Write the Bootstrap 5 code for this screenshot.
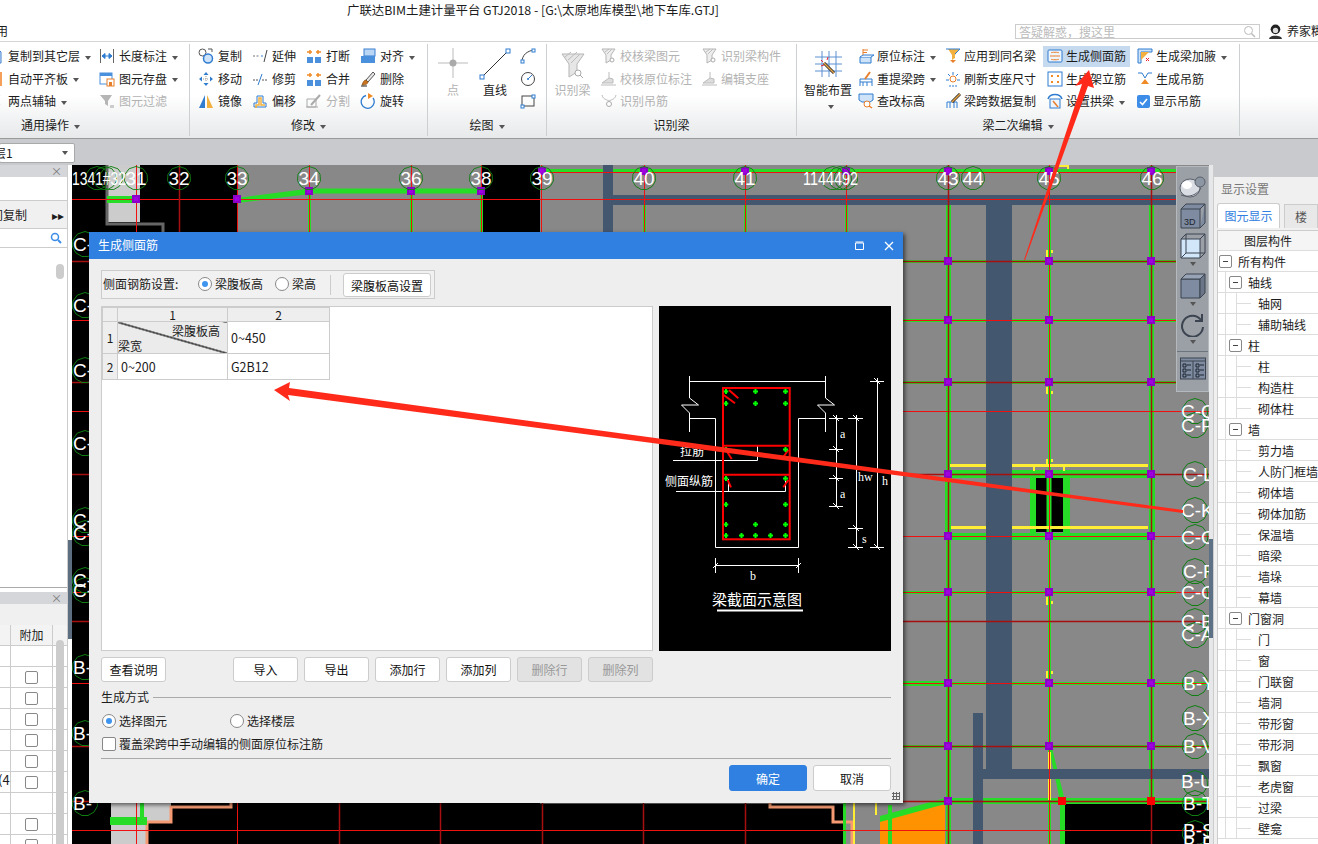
<!DOCTYPE html>
<html lang="zh">
<head>
<meta charset="utf-8">
<title>广联达BIM土建计量平台</title>
<link href="https://cdn.jsdelivr.net/npm/bootstrap@5.3.0/dist/css/bootstrap.min.css" rel="stylesheet">
<style>
html,body{margin:0;height:844px;width:1318px;overflow:hidden}
body{position:relative;font:12px/1.2 "Noto Sans CJK SC","Noto Sans",sans-serif;color:#1c1c1c;background:#fff}
.ic{width:16px;height:16px;flex:none}
.fn{flex:none}
.hdr1{height:21px;padding-left:347px;line-height:21px;white-space:nowrap;font-size:12.4px}
.hdr2{height:20px;overflow:hidden}
.hdr2 .mn{margin-left:-4px}
.srch{width:245px;height:15px;border:1px solid #ccc;color:#bbb;padding:0 3px;line-height:13px}
.usr{width:58px;padding-left:8px;white-space:nowrap;overflow:hidden;flex:none}
.ribbon{height:98px;border-top:1px solid #d5d5d5;border-bottom:1px solid #9a9a9a;background:linear-gradient(#fff 55%,#e7e9ea);display:flex}
.rg{display:flex;flex-direction:column;border-right:1px solid #ccd0d2;margin:2px 0 2px;flex:none}
.rb{display:grid;grid-template-rows:repeat(3,22.5px);grid-auto-flow:column;height:72px;margin-top:1px}
.rf{height:22px;line-height:22px;text-align:center;margin-top:0}
.it{display:flex;align-items:center;gap:3px;white-space:nowrap;height:22.5px}
.g1 .it,.g2 .it{gap:4px}
.dis{color:#b3b3b3}
.tri{display:inline-block;width:0;height:0;border:3px solid transparent;border-top:4px solid #555;border-bottom:0;margin-left:5px;vertical-align:middle}
.tbtri{margin:3px 0}
.bigit{grid-row:1/span 3;display:flex;flex-direction:column;align-items:center;white-space:nowrap}
.g1{width:190px}.g1 .rb{grid-template-columns:111px 80px;margin-left:-12px}.g1 .rf{padding-right:88px}
.g2{width:238px}.g2 .rb{grid-template-columns:54px 54px 54px 60px;padding-left:8px}
.g3{width:119px}.g3 .rb{grid-template-columns:42px 40px 20px;padding-left:10px}.g3 .bigit{width:30px}.g3 .bigit svg{margin-top:3px}.g3 .bigit span{margin-top:3px}
.g4{width:250px}.g4 .rb{grid-template-columns:47px 101px 90px;padding-left:7px}.g4 .bigit{width:37px}
.g5{width:443px}.g5 .rb{grid-template-columns:55px 87px 102px 90px 90px;padding-left:6px}.g5 .bigit{width:50px}
.hlt{background:#c5d9ef;margin:1px 0 1px -4px;padding-left:4px;width:87px;height:20.5px}
.chk-on{width:13px;height:13px;background:#3d8de8;border-radius:2px;color:#fff;flex:none;display:flex}
.bar2{height:26px;background:#c8cacd;padding-top:4px}
.sel{width:76px;height:20px;margin-left:-1px;background:#fff;border:1px solid #a9a9a9;border-radius:2px;display:flex;align-items:center;justify-content:space-between;padding:0 6px 0 0;overflow:hidden}
.sel span:first-child{margin-left:-6px}
.mainrow{height:679px;display:flex;overflow:hidden}
.lp{width:68px;border-right:1px solid #ccc;flex:none;display:flex;flex-direction:column;background:#fff;overflow:hidden;white-space:nowrap}
.lbar{height:12px;background:#d4d6da;text-align:right;padding-right:5px;line-height:12px;font-size:11px;color:#777;flex:none}
.lblank{height:23px;flex:none}
.lgray{background:#f0f0f0;border-top:1px solid #ccc;border-bottom:1px solid #ccc;height:29px;line-height:27px;display:flex;justify-content:space-between;padding-right:3px;flex:none}
.lsearch{height:19px;border-bottom:1px solid #ccc;display:flex;justify-content:flex-end;padding-right:5px;align-items:center;flex:none}
.lscroll{height:340px;position:relative;border-bottom:1px solid #aaa;flex:none}
.thumb{position:absolute;left:56px;width:8px;background:#ccc;border-radius:4px}
.lp2{position:relative;flex:1;margin-top:4px}
.lsub{background:#f0f0f0;height:21px}
.lr{height:21px;display:flex;border-bottom:1px solid #ccc;flex:none}
.lr .a{width:11px;border-right:1px solid #ccc;flex:none;overflow:hidden;text-indent:-2px;font-size:13px}
.lr .b{width:42px;border-right:1px solid #ccc;display:flex;align-items:center;justify-content:center;flex:none}
.lhead{background:#f3f3f3}
.cbx{width:13px;height:13px;border:1px solid #888;border-radius:2px;background:#fff;flex:none;display:inline-block}
.sbar{width:4px;flex:none;background:#fff;position:relative}
.sbar i{position:absolute;left:0;width:4px;background:#5d6e80}
.cv{width:1137px;flex:none;position:relative;overflow:hidden;background:#000}
.cv>svg{display:block}
.ftb{position:absolute;left:1104px;top:1px;width:33px;height:226px;background:#9b9fa6;border:1px solid #b5b8bc;display:flex;flex-direction:column;align-items:center}
.sb2{width:4px;flex:none;position:relative;background:#e6e7e8}
.rp{flex:1;background:#f0f0f0;border-left:1px solid #ccc;overflow:hidden;white-space:nowrap}
.rp-top{height:12px;background:#c8cacd}
.rp-h{height:23px;line-height:23px;padding-left:7px;color:#777}
.tabs{display:flex;padding-left:3px;gap:4px;height:25px;margin-top:3px}
.tb1{width:75px;background:#fff;border:1px solid #ccc;border-bottom:0;border-radius:3px 3px 0 0;text-align:center;line-height:24px;color:#2f80e0}
.tb2{width:40px;background:#e8e8e8;border:1px solid #ccc;border-bottom:0;text-align:center;line-height:24px;color:#555;margin-top:1px}
.tree{margin:2px 0 0 3px;border-left:1px solid #ccc;background:#fff;height:620px}
.thd{height:21px;line-height:19px;text-align:center;background:#f5f5f5;border-bottom:1px solid #ddd;border-top:1px solid #ccc}
.tr0{height:21px;border-bottom:1px solid #ddd;display:flex;align-items:center;background-repeat:no-repeat;padding-top:2px}
.exp{width:13px;height:13px;border:1px solid #888;border-radius:2px;background:#fff;display:inline-block;position:relative;flex:none;margin-right:6px;margin-top:-2px}
.exp::after{content:"";position:absolute;left:3px;right:3px;top:5px;height:1px;background:#444}
.l0{padding-left:1px}
.l1{padding-left:11px;background-image:linear-gradient(#ddd,#ddd);background-size:1px 100%;background-position:7px 0}
.l2{padding-left:40px;background-image:linear-gradient(#ddd,#ddd),linear-gradient(#ddd,#ddd),linear-gradient(#ddd,#ddd);background-size:1px 100%,1px 100%,15px 1px;background-position:7px 0,18px 0,18px 10px}
.dlg{position:absolute;left:89px;top:232px;width:814px;height:571px;background:#eee;box-shadow:2px 2px 4px rgba(0,0,0,.55);display:flex;flex-direction:column}
.dt{height:27px;background:#2f80e0;color:#fff;display:flex;align-items:center;justify-content:space-between;padding:0 9px 0 9px;flex:none}
.dt b{font-weight:400;letter-spacing:0}
.db{flex:1;padding:11px 12px 0 12px;position:relative}
.r1{height:29px;width:334px;border:1px solid #ccc;background:#f1f1f1;display:flex;align-items:center;padding-left:1px}
.rd{width:14px;height:14px;border:1px solid #888;border-radius:50%;background:#fff;display:inline-block;flex:none;position:relative}
.rd.on::after{content:"";position:absolute;left:3px;top:3px;width:6px;height:6px;border-radius:50%;background:#3f94ee}
.btn.bd{height:25px;width:65px;padding:0;font-size:12px;line-height:23px;border:1px solid #ccc;border-radius:3px;background:#fff;color:#111;flex:none}
.btn.bd:disabled{background:#e2e2e2;color:#999;opacity:1;border-color:#ccc}
.btn.bp{background:#2f80e0;border-color:#2f80e0;color:#fff;width:78px;height:26px}
.btn.bw{width:78px;height:26px}
.tbox{width:552px;height:345px;background:#fff;border:1px solid #ccc;flex:none}
.gt{border-collapse:collapse;table-layout:fixed;width:227px}
.gt td,.gt th{border:1px solid #ccc;padding:0 3px;font-weight:400;font-size:12.5px}
.gt .hh{background:#eee;text-align:center;height:14px;line-height:12px;font-size:12px;padding:0}
.gt .diag{height:32px;padding:0;font-size:12px;background:linear-gradient(to top right,transparent calc(50% - .9px),#111 calc(50% - .4px),#111 calc(50% + .4px),transparent calc(50% + .9px)),#ebebeb}
.diag div{display:flex;flex-direction:column;height:100%;justify-content:space-between;line-height:14px;padding:2px 7px 0 0}
.diag span:first-child{text-align:right}
.fl{display:flex;align-items:center;gap:3px;white-space:nowrap}
.hrln{flex:1;height:0;border-top:1px solid #aaa}
.grip{position:absolute;right:3px;bottom:3px;width:8px;height:8px;background:radial-gradient(circle,#666 1px,transparent 1.2px) 0 0/3px 3px}
.ovl{position:absolute;left:0;top:0;pointer-events:none}
</style>
</head>
<body>
<svg width="0" height="0" style="position:absolute">
<defs>
<symbol id="c" viewBox="0 0 26 26"><path d="M13 .5 20.5 3 25 9 25.5 16 22 22 16 25.5H10L4 22 .5 16 1 9 5.5 3Z" fill="none" stroke="#0f7f12"/></symbol>
<symbol id="p" viewBox="0 0 8 8"><rect width="8" height="8" fill="#8a00c8"/><rect x="2" y="2" width="4" height="4" fill="#a000e0"/></symbol>
<symbol id="g" viewBox="0 0 5 5"><path d="M1.500 0h2v1.500H5v2H3.500V5h-2V3.500H0v-2h1.500z" fill="#0f0"/></symbol>
<symbol id="i-doc" viewBox="0 0 16 16"><path d="M3 1h7l3 3v11H3z" fill="#dce9f7" stroke="#3b7fd0"/></symbol>
<symbol id="i-dim" viewBox="0 0 16 16"><path d="M1.5 1v14M14.5 1v14" stroke="#666"/><path d="M3 8h10M3 8l3-2.5v5zM13 8l-3-2.5v5z" stroke="#2f7cd0" fill="#2f7cd0"/></symbol>
<symbol id="i-win" viewBox="0 0 16 16"><rect x="1" y="2" width="12" height="11" fill="#fff" stroke="#4a90dc"/><path d="M1 2h12v3H1z" fill="#4a90dc"/><rect x="8" y="8" width="7" height="7" fill="#fff" stroke="#e87f2b"/><rect x="10" y="11" width="3" height="4" fill="#e87f2b"/></symbol>
<symbol id="i-fun" viewBox="0 0 16 16"><path d="M1 2h12L9 8v5L6 11V8z" fill="#b5b5b5"/><path d="M11 12h4v3h-4z" fill="#ccc"/></symbol>
<symbol id="i-cp" viewBox="0 0 16 16"><circle cx="4.5" cy="4.5" r="3.5" fill="#fff" stroke="#555"/><circle cx="10" cy="10.5" r="4.5" fill="#cfe3f8" stroke="#2f7cd0" stroke-width="1.5"/><path d="M10 1h4v3" fill="none" stroke="#555"/></symbol>
<symbol id="i-ext" viewBox="0 0 16 16"><path d="M1 8h7" stroke="#777" stroke-dasharray="2 1.5"/><path d="M9 8h3" stroke="#2f7cd0" stroke-dasharray="2 1"/><path d="M15 2 12 14" stroke="#444"/></symbol>
<symbol id="i-brk" viewBox="0 0 16 16"><rect x="1" y="9" width="6" height="6" fill="#4a90dc"/><rect x="9" y="9" width="6" height="6" fill="#4a90dc"/><path d="M1 4h5M4 2v4M10 4h5M12 2v4" stroke="#f08a24" stroke-width="1.5"/></symbol>
<symbol id="i-aln" viewBox="0 0 16 16"><rect x="4" y="1" width="11" height="7" fill="#b9d6f5" stroke="#3b7fd0"/><rect x="1" y="8" width="14" height="7" fill="#4a90dc"/></symbol>
<symbol id="i-mov" viewBox="0 0 16 16"><path d="M8 1 5.500 4h5zM8 15l-2.500-3h5zM1 8l3-2.500v5zM15 8l-3-2.500v5z" fill="#2f7cd0"/><path d="M8 5v6M5 8h6" stroke="#999" stroke-dasharray="1 1"/></symbol>
<symbol id="i-trm" viewBox="0 0 16 16"><path d="M1 9h5M10 9h5" stroke="#555" stroke-dasharray="2 1"/><path d="M6 14 10 3" stroke="#2f7cd0"/></symbol>
<symbol id="i-del" viewBox="0 0 16 16"><path d="M13 1 6 9l2 2 7-8z" fill="#e6e6e6" stroke="#555"/><path d="M6 9c-2 0-3 2-4 5 3 0 6-1 6-3z" fill="#c8741f" stroke="#8a4a10" stroke-width=".7"/><path d="M1 15h6" stroke="#222"/></symbol>
<symbol id="i-mir" viewBox="0 0 16 16"><path d="M7 2v13H1z" fill="#2f7cd0"/><path d="M9 2v13h6z" fill="#f2b13e"/></symbol>
<symbol id="i-off" viewBox="0 0 16 16"><path d="M2 14v-4h3V3h6v7h3v4z" fill="none" stroke="#2f7cd0"/><path d="M4 15v-3h3V5h2v7h4" fill="none" stroke="#f2b13e" stroke-width="1.500"/></symbol>
<symbol id="i-spl" viewBox="0 0 16 16"><path d="M1 6h9v8H1z" fill="none" stroke="#aaa"/><path d="M5 12 14 2" stroke="#aaa" stroke-width="2"/><path d="M0 14h12" stroke="#aaa"/></symbol>
<symbol id="i-rot" viewBox="0 0 16 16"><path d="M6 2.500A6.500 6.500 0 1 0 13 5" fill="none" stroke="#2f7cd0" stroke-width="1.300"/><path d="M8 0l5 3-5 3z" fill="#f08a24"/></symbol>
<symbol id="i-chk1" viewBox="0 0 28 30"><path d="M3 5h22l-7 10v8l-8 5V15z" fill="#e6e6e6" stroke="#b5b5b5"/><path d="M6 8 12 3M9 11l9-8M12 14l9-9" stroke="#bbb"/><circle cx="19" cy="24" r="3" fill="#fff" stroke="#aaa"/><path d="M21 26l3 3" stroke="#aaa"/></symbol>
<symbol id="i-chk2" viewBox="0 0 16 16"><path d="M1 1h13l-4 6v5l-5 3V7z" fill="#eee" stroke="#b5b5b5"/><path d="M4 4l4-3M6 6l5-5" stroke="#bbb"/><circle cx="11" cy="12" r="2" fill="#fff" stroke="#aaa"/></symbol>
<symbol id="i-chk3" viewBox="0 0 16 16"><path d="M8 1v6" stroke="#bbb"/><path d="M1 12l7-5 4 1v4z" fill="#ddd" stroke="#bbb"/><path d="M0 14h15" stroke="#bbb"/></symbol>
<symbol id="i-hng" viewBox="0 0 16 16"><path d="M1 2c1 4 3 4 7 6 4-2 6-2 7-6" fill="none" stroke="#bbb"/><circle cx="8" cy="11" r="2.500" fill="#fff" stroke="#aaa"/></symbol>
<symbol id="i-smt" viewBox="0 0 30 34"><path d="M9 2v26M16 2v26M23 2v26M2 8h27M2 15h27M2 22h27" stroke="#5a90d0"/><path d="M11 14l10 10" stroke="#222" stroke-width="3"/><path d="M11 14l10 10" stroke="#e7a54a" stroke-width="1.500"/><path d="M8 11l2 2M15 8l-1 3M8 17l3-1" stroke="#e23"/></symbol>
<symbol id="i-yw" viewBox="0 0 16 16"><path d="M2 9h11v6H2z" fill="#cfe3f8" stroke="#2f7cd0"/><path d="M2 9l3-2h11l-3 2" fill="#e8f1fb" stroke="#2f7cd0"/><path d="M5 1v6M5 2h5M5 4.500h4" stroke="#e87f2b"/></symbol>
<symbol id="i-ct" viewBox="0 0 16 16"><path d="M3 1h11l-4 6v3l-3 2V7z" fill="#f2b13e"/><path d="M1 1h14l-5 5" fill="none" stroke="#2f7cd0"/><path d="M5 12l3 3 3-3z" fill="#e87f2b"/></symbol>
<symbol id="i-cm" viewBox="0 0 16 16"><rect x="1" y="2" width="14" height="12" rx="1" fill="#eef5fc" stroke="#2f7cd0"/><path d="M4 5c0-1 8-1 8 0M4 11c0 1 8 1 8 0" fill="none" stroke="#e87f2b"/><path d="M3 8h10" stroke="#e87f2b"/></symbol>
<symbol id="i-jl" viewBox="0 0 16 16"><rect x="1" y="1" width="14" height="14" fill="#fff" stroke="#2f7cd0"/><rect x="4" y="4" width="2" height="2" fill="#f08a24"/><rect x="10" y="4" width="2" height="2" fill="#f08a24"/><rect x="4" y="10" width="2" height="2" fill="#f08a24"/><rect x="10" y="10" width="2" height="2" fill="#f08a24"/></symbol>
<symbol id="i-ty" viewBox="0 0 16 16"><path d="M2 15V8h12v7M2 11h12M5 11v4M9 11v4" fill="none" stroke="#2f7cd0"/><path d="M12 1 7 8" stroke="#e87f2b" stroke-width="2"/></symbol>
<symbol id="i-cg" viewBox="0 0 16 16"><path d="M1 1h14v6l-3 2H4L1 7z" fill="#cfe3f8" stroke="#2f7cd0"/><circle cx="9" cy="11" r="3" fill="#fff" stroke="#e87f2b"/><path d="M11 13l3 2" stroke="#e87f2b" stroke-width="1.500"/></symbol>
<symbol id="i-sx" viewBox="0 0 16 16"><circle cx="8" cy="8" r="3" fill="none" stroke="#e87f2b"/><path d="M8 1v3M3 3l2 2M13 3l-2 2M1 9h3M12 9h3" stroke="#2f7cd0"/><path d="M4 15h8" stroke="#2f7cd0" stroke-dasharray="2 1"/></symbol>
<symbol id="i-kl" viewBox="0 0 16 16"><path d="M2 15V9h10v6M5 9v6M9 9v6" fill="none" stroke="#2f7cd0"/><path d="M15 1 7 9" stroke="#222" stroke-width="3"/><path d="M15 1 7 9" stroke="#e7a54a" stroke-width="1.600"/></symbol>
<symbol id="i-gl" viewBox="0 0 16 16"><path d="M1 6c2-6 12-6 14 0" fill="none" stroke="#2f7cd0" stroke-width="1.500"/><rect x="3" y="6" width="10" height="9" fill="#eef5fc" stroke="#2f7cd0"/><path d="M6 8l5 6" stroke="#e87f2b" stroke-width="1.500"/></symbol>
<symbol id="i-jy" viewBox="0 0 16 16"><path d="M1 1h14v3H4v11H1z" fill="#cfe3f8" stroke="#2f7cd0"/><path d="M4 4l8 0-8 8z" fill="#f2b13e"/><path d="M9 10l3 3m0-3-3 3" stroke="#e23"/></symbol>
<symbol id="i-dj" viewBox="0 0 16 16"><path d="M1 2h4l3 5 3-5h4" fill="none" stroke="#2f7cd0"/><path d="M4 13h8L8 8z" fill="#f08a24"/></symbol>
</defs>
</svg>

<div class="hdr1">广联达BIM土建计量平台 GTJ2018 - [G:\太原地库模型\地下车库.GTJ]</div>
<div class="hdr2 d-flex align-items-center">
  <span class="mn">用</span>
  <div class="srch ms-auto d-flex justify-content-between">答疑解惑，搜这里<svg width="13" height="13" viewBox="0 0 13 13"><circle cx="5.500" cy="5.500" r="4" fill="none" stroke="#bbb"/><path d="M8.500 8.500 12 12" stroke="#bbb" stroke-width="1.500"/></svg></div>
  <div class="usr d-flex align-items-center gap-1"><svg width="15" height="15" viewBox="0 0 14 14" class="fn"><circle cx="7" cy="5" r="4.500" fill="#222"/><circle cx="7" cy="6" r="2.500" fill="#ddd"/><path d="M1 14c0-4 12-4 12 0z" fill="#333"/></svg><span>养家糊口</span></div>
</div>

<div class="ribbon">
  <div class="rg g1">
    <div class="rb">
      <div class="it"><svg class="ic"><use href="#i-doc"/></svg><span>复制到其它层<i class="tri"></i></span></div>
      <div class="it"><svg class="ic"><rect width="14" height="14" y="1" fill="#f5a05a"/></svg><span>自动平齐板<i class="tri"></i></span></div>
      <div class="it"><svg class="ic"><path d="M4 2l8 10M12 2 4 12" stroke="#e88a3a"/></svg><span>两点辅轴<i class="tri"></i></span></div>
      <div class="it"><svg class="ic"><use href="#i-dim"/></svg><span>长度标注<i class="tri"></i></span></div>
      <div class="it"><svg class="ic"><use href="#i-win"/></svg><span>图元存盘<i class="tri"></i></span></div>
      <div class="it dis"><svg class="ic"><use href="#i-fun"/></svg><span>图元过滤</span></div>
    </div>
    <div class="rf">通用操作<i class="tri"></i></div>
  </div>
  <div class="rg g2">
    <div class="rb">
      <div class="it"><svg class="ic"><use href="#i-cp"/></svg>复制</div>
      <div class="it"><svg class="ic"><use href="#i-mov"/></svg>移动</div>
      <div class="it"><svg class="ic"><use href="#i-mir"/></svg>镜像</div>
      <div class="it"><svg class="ic"><use href="#i-ext"/></svg>延伸</div>
      <div class="it"><svg class="ic"><use href="#i-trm"/></svg>修剪</div>
      <div class="it"><svg class="ic"><use href="#i-off"/></svg>偏移</div>
      <div class="it"><svg class="ic"><use href="#i-brk"/></svg>打断</div>
      <div class="it"><svg class="ic"><use href="#i-brk"/></svg>合并</div>
      <div class="it dis"><svg class="ic"><use href="#i-spl"/></svg>分割</div>
      <div class="it"><svg class="ic"><use href="#i-aln"/></svg><span>对齐<i class="tri"></i></span></div>
      <div class="it"><svg class="ic"><use href="#i-del"/></svg>删除</div>
      <div class="it"><svg class="ic"><use href="#i-rot"/></svg>旋转</div>
    </div>
    <div class="rf">修改<i class="tri"></i></div>
  </div>
  <div class="rg g3">
    <div class="rb">
      <div class="bigit dis"><svg width="30" height="32" viewBox="0 0 30 32"><path d="M15 0v30M0 15h30" stroke="#bbb"/><circle cx="15" cy="15" r="3.500" fill="#aaa"/></svg><span>点</span></div>
      <div class="bigit"><svg width="32" height="32" viewBox="0 0 32 32"><path d="M3 29 29 3" stroke="#333"/><rect x="1" y="27" width="4" height="4" fill="#fff" stroke="#2f7cd0"/><rect x="27" y="1" width="4" height="4" fill="#fff" stroke="#2f7cd0"/></svg><span>直线</span></div>
      <div class="it"><svg class="ic"><path d="M2 14C2 7 7 3 14 2" fill="none" stroke="#444"/><rect x="1" y="12" width="3" height="3" fill="#fff" stroke="#2f7cd0"/><rect x="12" y="1" width="3" height="3" fill="#fff" stroke="#2f7cd0"/></svg></div>
      <div class="it"><svg class="ic"><circle cx="8" cy="8" r="6.500" fill="none" stroke="#444"/><circle cx="8" cy="8" r="1" fill="#2f7cd0"/><path d="M8 8l4-4" stroke="#2f7cd0"/></svg></div>
      <div class="it"><svg class="ic"><rect x="2" y="3" width="12" height="10" fill="none" stroke="#444"/><rect x="1" y="12" width="3" height="3" fill="#fff" stroke="#2f7cd0"/><rect x="12" y="2" width="3" height="3" fill="#fff" stroke="#2f7cd0"/></svg></div>
    </div>
    <div class="rf">绘图<i class="tri"></i></div>
  </div>
  <div class="rg g4">
    <div class="rb">
      <div class="bigit dis"><svg width="28" height="30" class="mt-1"><use href="#i-chk1"/></svg><span class="mt-1">识别梁</span></div>
      <div class="it dis"><svg class="ic"><use href="#i-chk2"/></svg>校核梁图元</div>
      <div class="it dis"><svg class="ic"><use href="#i-chk3"/></svg>校核原位标注</div>
      <div class="it dis"><svg class="ic"><use href="#i-hng"/></svg>识别吊筋</div>
      <div class="it dis"><svg class="ic"><use href="#i-chk2"/></svg>识别梁构件</div>
      <div class="it dis"><svg class="ic"><use href="#i-chk3"/></svg>编辑支座</div>
      <div></div>
    </div>
    <div class="rf">识别梁</div>
  </div>
  <div class="rg g5">
    <div class="rb">
      <div class="bigit"><svg width="30" height="34" class="mt-1"><use href="#i-smt"/></svg><span>智能布置</span><i class="tri mt-2"></i></div>
      <div class="it"><svg class="ic"><use href="#i-yw"/></svg><span>原位标注<i class="tri"></i></span></div>
      <div class="it"><svg class="ic"><use href="#i-ty"/></svg><span>重提梁跨<i class="tri"></i></span></div>
      <div class="it"><svg class="ic"><use href="#i-cg"/></svg>查改标高</div>
      <div class="it"><svg class="ic"><use href="#i-ct"/></svg>应用到同名梁</div>
      <div class="it"><svg class="ic"><use href="#i-sx"/></svg>刷新支座尺寸</div>
      <div class="it"><svg class="ic"><use href="#i-kl"/></svg>梁跨数据复制</div>
      <div class="it hlt"><svg class="ic"><use href="#i-cm"/></svg>生成侧面筋</div>
      <div class="it"><svg class="ic"><use href="#i-jl"/></svg>生成架立筋</div>
      <div class="it"><svg class="ic"><use href="#i-gl"/></svg><span>设置拱梁<i class="tri"></i></span></div>
      <div class="it"><svg class="ic"><use href="#i-jy"/></svg><span>生成梁加腋<i class="tri"></i></span></div>
      <div class="it"><svg class="ic"><use href="#i-dj"/></svg>生成吊筋</div>
      <div class="it"><span class="chk-on"><svg viewBox="0 0 13 13"><path d="M3 7l2.500 2.500L10 4" fill="none" stroke="#fff" stroke-width="1.600"/></svg></span>显示吊筋</div>
    </div>
    <div class="rf">梁二次编辑<i class="tri"></i></div>
  </div>
</div>

<div class="bar2"><div class="sel"><span>层1</span><i class="tri"></i></div></div>

<div class="mainrow">
  <div class="lp">
    <div class="lbar">×</div>
    <div class="lblank"></div>
    <div class="lgray"><span style="margin-left:-9px">间复制</span><span>▸▸</span></div>
    <div class="lsearch"><svg width="12" height="12" viewBox="0 0 12 12"><circle cx="5" cy="5" r="3.500" fill="none" stroke="#3d8de8" stroke-width="1.500"/><path d="M8 8l3 3" stroke="#3d8de8" stroke-width="2"/></svg></div>
    <div class="lscroll"><span class="thumb" style="top:16px;height:15px"></span></div>
    <div class="lp2">
      <div class="lbar">×</div>
      <div class="lsub"></div>
      <div class="lr lhead"><div class="a"></div><div class="b">附加</div></div>
      <div class="lr"><div class="a"></div><div class="b"></div></div>
      <div class="lr"><div class="a"></div><div class="b"><span class="cbx"></span></div></div>
      <div class="lr"><div class="a"></div><div class="b"><span class="cbx"></span></div></div>
      <div class="lr"><div class="a"></div><div class="b"><span class="cbx"></span></div></div>
      <div class="lr"><div class="a"></div><div class="b"><span class="cbx"></span></div></div>
      <div class="lr"><div class="a"></div><div class="b"><span class="cbx"></span></div></div>
      <div class="lr"><div class="a">(4</div><div class="b"><span class="cbx"></span></div></div>
      <div class="lr"><div class="a"></div><div class="b"></div></div>
      <div class="lr"><div class="a"></div><div class="b"><span class="cbx"></span></div></div>
      <div class="lr"><div class="a"></div><div class="b"><span class="cbx"></span></div></div>
      <span class="thumb" style="top:48px;height:220px"></span>
    </div>
  </div>
  <div class="sbar"><i style="top:375px;height:99px"></i></div>

  <div class="cv">
    <svg width="1137" height="679" viewBox="72 165 1137 679" font-family="'Liberation Sans',sans-serif">
      <rect x="72" y="165" width="1137" height="679" fill="#000"/>
      <rect x="237" y="165" width="245" height="70" fill="#888"/>
      <rect x="540" y="165" width="669" height="639" fill="#888"/>
      <rect x="843" y="803" width="222" height="41" fill="#888"/>
      <path d="M880 819 945 804V844H880Z" fill="#ff9200"/>
      <rect x="107" y="165" width="33" height="57" fill="#ccc"/>
      <path d="M107 165V224H163V236" fill="none" stroke="#666" stroke-width="3"/>
      <path d="M111 803V844H147V822H171V803Z" fill="#ccc"/>
      <path d="M231 803v4H171v15H147V844M770 803v4H833v15h19V844" fill="none" stroke="#f59a72" stroke-width="3"/>
      <g fill="#27dc27">
        <rect x="107" y="196" width="29" height="7"/>
        <path d="M237 198 310 188.500V194L237 203Z"/>
        <rect x="310" y="188.500" width="172" height="5"/>
        <rect x="540" y="169" width="636" height="4"/>
        <rect x="110" y="817" width="37" height="8"/>
        <rect x="140" y="803" width="4" height="15"/>
        <rect x="903" y="260" width="273" height="3"/>
        <rect x="903" y="319" width="273" height="3"/>
        <rect x="903" y="381" width="273" height="3"/>
        <rect x="945" y="470" width="210" height="8"/>
        <rect x="945" y="533" width="210" height="7"/>
        <rect x="945" y="470" width="6" height="70"/>
        <rect x="1149" y="470" width="6" height="70"/>
        <rect x="903" y="591" width="273" height="3"/>
        <rect x="903" y="681" width="45" height="5"/>
        <rect x="948" y="682" width="262" height="3"/>
        <rect x="903" y="745" width="307" height="3"/>
        <rect x="945" y="798" width="265" height="6"/>
        <path d="M880 816 945 798V804L880 822Z"/>
        <rect x="888" y="805" width="4" height="39"/>
        <rect x="1060" y="801" width="5" height="43"/>
        <path d="M1049 748 1052 748 1065 801H1060Z"/>
        <rect x="843" y="803" width="3" height="41"/>
        <rect x="946" y="205" width="5" height="639"/>
        <rect x="1048" y="205" width="3" height="639"/>
        <rect x="1149" y="205" width="5" height="598"/>
        <rect x="308" y="194" width="3" height="42"/>
        <rect x="410" y="194" width="3" height="42"/>
        <rect x="480" y="194" width="3" height="42"/>
        <rect x="643" y="205" width="3" height="31"/>
        <rect x="744" y="205" width="3" height="31"/>
        <rect x="845" y="205" width="3" height="31"/>
      </g>
      <rect x="1036" y="478" width="27" height="54" fill="#000"/>
      <rect x="1030" y="470" width="6" height="70" fill="#27dc27"/>
      <rect x="1063" y="470" width="7" height="70" fill="#27dc27"/>
      <rect x="1046.500" y="478" width="5" height="54" fill="#27dc27"/>
      <g fill="#ffee33">
        <rect x="950" y="464" width="198" height="3"/>
        <rect x="951" y="526" width="197" height="3"/>
        <rect x="1033" y="467" width="2" height="4"/><rect x="1063" y="467" width="2" height="4"/>
        <rect x="1046" y="250" width="2" height="8"/><rect x="1051" y="250" width="2" height="3"/>
        <rect x="1046" y="387" width="2" height="7"/><rect x="1051" y="391" width="2" height="3"/>
        <rect x="1046" y="459" width="2" height="6"/><rect x="1051" y="459" width="2" height="3"/>
        <rect x="1046" y="597" width="2" height="8"/><rect x="1051" y="601" width="2" height="3"/>
        <rect x="1046" y="671" width="2" height="7"/><rect x="1051" y="671" width="2" height="3"/>
        <rect x="1048" y="752" width="3" height="48"/>
        <rect x="1059" y="165" width="10" height="2"/><rect x="1067" y="165" width="2" height="4"/>
        <rect x="853" y="803" width="2" height="41"/><rect x="875" y="803" width="2" height="12"/>
      </g>
      <g fill="#43576e">
        <rect x="603" y="165" width="10" height="75"/>
        <rect x="603" y="195" width="573" height="10"/>
        <rect x="986" y="205" width="26" height="570"/>
        <rect x="973" y="769" width="236" height="10"/>
        <rect x="973" y="713" width="10" height="131"/>
      </g>
      <rect x="1065" y="805" width="144" height="39" fill="#000"/>
      <g stroke="#f01010" fill="none">
        <path d="M72 199.500H1176M540 172.500H1176"/>
        <path d="M72 320.500H1176M72 411.500H1209M72 592.500H1209M72 536.500H1209M72 683.500H1209M72 830.500H1209"/>
        <path d="M136.500 165V236M237.500 165V236M309.500 165V236M411.500 165V236M481.500 165V236M541.500 165V236M644.500 165V236M745.500 165V236M846.500 165V236"/>
        <path d="M1049.500 165V844"/>
        <path d="M136.500 803V844M237.500 803V844"/>
      </g>
      <g stroke="#a81010" stroke-width="1.500" fill="none">
        <path d="M179.500 165V236M339.500 803V844M440.500 803V844M542.500 803V844M643.500 803V844M745.500 803V844"/>
        <path d="M72 261.500H1176M72 382.500H1176M72 474.500H1209M72 621.500H1209M72 746.500H1209M72 801.500H1209"/>
        <path d="M948.500 165V844M1151.500 165V844"/>
      </g>
      <g id="pp">
        <use href="#p" x="132" y="195" width="8" height="8"/><use href="#p" x="233" y="195" width="8" height="8"/>
        <use href="#p" x="305" y="187" width="8" height="8"/><use href="#p" x="407" y="187" width="8" height="8"/><use href="#p" x="477" y="187" width="8" height="8"/>
        <use href="#p" x="538" y="167" width="8" height="8"/><use href="#p" x="640" y="167" width="8" height="8"/><use href="#p" x="741" y="167" width="8" height="8"/><use href="#p" x="842" y="167" width="8" height="8"/>
        <use href="#p" x="944" y="167" width="8" height="8"/><use href="#p" x="1045" y="167" width="8" height="8"/><use href="#p" x="1147" y="167" width="8" height="8"/>
        <use href="#p" x="944" y="257" width="8" height="8"/><use href="#p" x="1045" y="257" width="8" height="8"/><use href="#p" x="1147" y="257" width="8" height="8"/>
        <use href="#p" x="944" y="316" width="8" height="8"/><use href="#p" x="1045" y="316" width="8" height="8"/><use href="#p" x="1147" y="316" width="8" height="8"/>
        <use href="#p" x="944" y="378" width="8" height="8"/><use href="#p" x="1045" y="378" width="8" height="8"/><use href="#p" x="1147" y="378" width="8" height="8"/>
        <use href="#p" x="944" y="470" width="8" height="8"/><use href="#p" x="1045" y="470" width="8" height="8"/><use href="#p" x="1147" y="470" width="8" height="8"/>
        <use href="#p" x="944" y="532" width="8" height="8"/><use href="#p" x="1045" y="532" width="8" height="8"/><use href="#p" x="1147" y="532" width="8" height="8"/>
        <use href="#p" x="944" y="588" width="8" height="8"/><use href="#p" x="1045" y="588" width="8" height="8"/><use href="#p" x="1147" y="588" width="8" height="8"/>
        <use href="#p" x="944" y="679" width="8" height="8"/><use href="#p" x="1045" y="679" width="8" height="8"/><use href="#p" x="1147" y="679" width="8" height="8"/>
        <use href="#p" x="944" y="742" width="8" height="8"/><use href="#p" x="1045" y="742" width="8" height="8"/><use href="#p" x="1147" y="742" width="8" height="8"/>
        <use href="#p" x="944" y="797" width="8" height="8"/>
      </g>
      <rect x="1058" y="797" width="8" height="8" fill="#f00"/><rect x="1147" y="797" width="8" height="8" fill="#f00"/>
      <g id="cc">
        <use href="#c" x="85" y="166" width="24" height="24"/><use href="#c" x="93" y="166" width="24" height="24"/><use href="#c" x="99" y="166" width="24" height="24"/>
        <use href="#c" x="124" y="166" width="24" height="24"/><use href="#c" x="167" y="166" width="24" height="24"/><use href="#c" x="225" y="166" width="24" height="24"/><use href="#c" x="297" y="166" width="24" height="24"/><use href="#c" x="399" y="166" width="24" height="24"/><use href="#c" x="469" y="166" width="24" height="24"/><use href="#c" x="530" y="166" width="24" height="24"/><use href="#c" x="632" y="166" width="24" height="24"/><use href="#c" x="733" y="166" width="24" height="24"/>
        <use href="#c" x="821" y="166" width="24" height="24"/><use href="#c" x="828" y="166" width="24" height="24"/><use href="#c" x="834" y="166" width="24" height="24"/>
        <use href="#c" x="936" y="166" width="24" height="24"/><use href="#c" x="961" y="166" width="24" height="24"/><use href="#c" x="1037" y="166" width="24" height="24"/><use href="#c" x="1140" y="166" width="24" height="24"/>
      </g>
      <g fill="#fff" font-size="19" text-anchor="middle">
        <text x="136" y="185">31</text><text x="179" y="185">32</text><text x="237" y="185">33</text><text x="309" y="185">34</text><text x="411" y="185">36</text><text x="481" y="185">38</text><text x="542" y="185">39</text><text x="644" y="185">40</text><text x="745" y="185">41</text>
        <text x="948" y="185">43</text><text x="973" y="185">44</text><text x="1049" y="185">45</text><text x="1152" y="185">46</text>
      </g>
      <g fill="#fff" font-size="19">
        <text x="72" y="185" textLength="54" lengthAdjust="spacingAndGlyphs">1341#32</text>
        <text x="803" y="185" textLength="55" lengthAdjust="spacingAndGlyphs">1144492</text>
      </g>
      <g>
        <use href="#c" x="72" y="231" width="26" height="26"/><use href="#c" x="72" y="292" width="26" height="26"/><use href="#c" x="72" y="357" width="26" height="26"/><use href="#c" x="72" y="430" width="26" height="26"/><use href="#c" x="72" y="507" width="26" height="26"/><use href="#c" x="72" y="520" width="26" height="26"/><use href="#c" x="72" y="567" width="26" height="26"/><use href="#c" x="72" y="577" width="26" height="26"/><use href="#c" x="72" y="654" width="26" height="26"/><use href="#c" x="72" y="720" width="26" height="26"/><use href="#c" x="72" y="790" width="26" height="26"/>
        <use href="#c" x="1182" y="398" width="26" height="26"/><use href="#c" x="1182" y="412" width="26" height="26"/><use href="#c" x="1182" y="461" width="26" height="26"/><use href="#c" x="1182" y="497" width="26" height="26"/><use href="#c" x="1182" y="524" width="26" height="26"/><use href="#c" x="1182" y="558" width="26" height="26"/><use href="#c" x="1182" y="580" width="26" height="26"/><use href="#c" x="1182" y="608" width="26" height="26"/><use href="#c" x="1182" y="622" width="26" height="26"/><use href="#c" x="1182" y="670" width="26" height="26"/><use href="#c" x="1182" y="705" width="26" height="26"/><use href="#c" x="1182" y="733" width="26" height="26"/><use href="#c" x="1182" y="770" width="26" height="26"/><use href="#c" x="1182" y="790" width="26" height="26"/><use href="#c" x="1182" y="820" width="26" height="26"/>
      </g>
      <g fill="#fff" font-size="19">
        <text x="73" y="251">C-</text><text x="73" y="312">C-</text><text x="73" y="377">C-</text><text x="73" y="450">C-</text><text x="73" y="527">C-</text><text x="73" y="540">C-</text><text x="73" y="587">C-</text><text x="73" y="597">C-</text><text x="73" y="674">B-</text><text x="73" y="740">B-</text><text x="73" y="810">B-</text>
        <text x="1181" y="418">C-Q</text><text x="1181" y="432">C-P</text><text x="1183" y="481">C-L</text><text x="1181" y="517">C-K</text><text x="1181" y="544">C-O</text><text x="1183" y="578">C-F</text><text x="1181" y="599">C-C</text><text x="1181" y="628">C-B</text><text x="1181" y="641">C-A</text><text x="1183" y="690">B-Y</text><text x="1183" y="725">B-X</text><text x="1183" y="753">B-V</text><text x="1181" y="788">B-U</text><text x="1183" y="810">B-T</text><text x="1183" y="837">B-S</text><text x="1183" y="850">B-R</text>
      </g>
    </svg>
    <div class="ftb">
      <svg width="28" height="24" viewBox="0 0 28 24" class="mt-2"><ellipse cx="11" cy="13" rx="10" ry="9" fill="#d9dde3" stroke="#59606a"/><ellipse cx="8" cy="10" rx="5" ry="4" fill="#fff"/><circle cx="21" cy="7" r="5" fill="#8d96a3" stroke="#59606a"/><path d="M2 20c8 3 16 0 20-7" fill="none" stroke="#59606a"/></svg>
      <svg width="26" height="26" viewBox="0 0 26 26" class="mt-1"><path d="M1 6h19v19H1z M1 6l5-5h19l-5 5M20 25l5-5V1" fill="#7e8ba0" stroke="#3b4450"/><text x="4" y="22" font-size="9" fill="#1d2530" font-family="Liberation Sans">3D</text></svg>
      <svg width="26" height="26" viewBox="0 0 26 26" class="mt-1"><path d="M1 6h19v19H1z" fill="#d2e6fa" stroke="#3b4450"/><path d="M1 6l5-5h19v19l-5 5M20 6l5-5M6 1v19h19M6 20l-5 5" fill="none" stroke="#3b4450"/></svg>
      <i class="tri tbtri"></i>
      <svg width="26" height="26" viewBox="0 0 26 26" class="mt-1"><path d="M1 6h19v19H1z" fill="#7e8ba0" stroke="#3b4450"/><path d="M1 6l5-5h19l-5 5z" fill="#98a4b6" stroke="#3b4450"/><path d="M20 25l5-5V1l-5 5z" fill="#6a7688" stroke="#3b4450"/></svg>
      <i class="tri tbtri"></i>
      <svg width="24" height="24" viewBox="0 0 24 24" class="mt-1"><path d="M20 7A10.500 10.500 0 1 0 22 14" fill="none" stroke="#3b4450" stroke-width="2"/><path d="M21 1v7h-7" fill="none" stroke="#3b4450" stroke-width="2"/></svg>
      <i class="tri tbtri"></i>
      <div class="w-100 mt-1 border-top border-secondary"></div>
      <svg width="26" height="24" viewBox="0 0 26 24" class="mt-1"><rect x=".5" y="2" width="25" height="21" fill="#7e8ba0" stroke="#3b4450"/><path d="M.5 5h25M13 5v18" stroke="#3b4450"/><path d="M3 8h3v3H3zM3 13h3v3H3zM3 18h3v3H3zM16 8h3v3h-3zM16 13h3v3h-3zM16 18h3v3h-3z" fill="none" stroke="#1d2530"/><path d="M7 9h4M7 14h4M7 19h4M20 9h4M20 14h4M20 19h4" stroke="#1d2530"/></svg>
    </div>
  </div>

  <div class="sb2"><i class="sbar" style="position:absolute;top:374px;height:99px;background:#5d7186"></i></div>

  <div class="rp">
    <div class="rp-top"></div>
    <div class="rp-h">显示设置</div>
    <div class="tabs"><div class="tb1">图元显示</div><div class="tb2">楼</div></div>
    <div class="tree">
      <div class="thd">图层构件</div>
      <div class="tr0 l0"><span class="exp"></span>所有构件</div>
      <div class="tr0 l1"><span class="exp"></span>轴线</div>
      <div class="tr0 l2">轴网</div>
      <div class="tr0 l2">辅助轴线</div>
      <div class="tr0 l1"><span class="exp"></span>柱</div>
      <div class="tr0 l2">柱</div>
      <div class="tr0 l2">构造柱</div>
      <div class="tr0 l2">砌体柱</div>
      <div class="tr0 l1"><span class="exp"></span>墙</div>
      <div class="tr0 l2">剪力墙</div>
      <div class="tr0 l2">人防门框墙</div>
      <div class="tr0 l2">砌体墙</div>
      <div class="tr0 l2">砌体加筋</div>
      <div class="tr0 l2">保温墙</div>
      <div class="tr0 l2">暗梁</div>
      <div class="tr0 l2">墙垛</div>
      <div class="tr0 l2">幕墙</div>
      <div class="tr0 l1"><span class="exp"></span>门窗洞</div>
      <div class="tr0 l2">门</div>
      <div class="tr0 l2">窗</div>
      <div class="tr0 l2">门联窗</div>
      <div class="tr0 l2">墙洞</div>
      <div class="tr0 l2">带形窗</div>
      <div class="tr0 l2">带形洞</div>
      <div class="tr0 l2">飘窗</div>
      <div class="tr0 l2">老虎窗</div>
      <div class="tr0 l2">过梁</div>
      <div class="tr0 l2">壁龛</div>
    </div>
  </div>
</div>

<div class="dlg">
  <div class="dt"><b>生成侧面筋</b><span class="d-flex align-items-center gap-3"><svg width="9" height="9" viewBox="0 0 9 9"><path d="M.5 2h8v6.500h-8zM.5 1h8" fill="none" stroke="#fff"/></svg><svg width="10" height="10" viewBox="0 0 10 10" class="ms-1"><path d="M1 1l8 8M9 1 1 9" stroke="#fff" stroke-width="1.300"/></svg></span></div>
  <div class="db">
    <div class="r1">
      <span style="width:95px">侧面钢筋设置:</span>
      <span class="fl" style="width:77px"><span class="rd on"></span>梁腹板高</span>
      <span class="fl" style="width:55px"><span class="rd"></span>梁高</span>
      <span style="border-left:1px solid #ccc;height:20px;margin-right:12px"></span>
      <button class="btn bd" style="width:88px;height:24px" type="button">梁腹板高设置</button>
    </div>
    <div class="d-flex" style="margin-top:7px;gap:6px">
      <div class="tbox">
        <table class="gt">
          <colgroup><col style="width:15px"><col style="width:110px"><col style="width:102px"></colgroup>
          <tr><td class="hh"></td><td class="hh">1</td><td class="hh">2</td></tr>
          <tr><td class="hh" style="height:32px">1</td><td class="diag"><div><span>梁腹板高</span><span>梁宽</span></div></td><td style="line-height:14px">0~450</td></tr>
          <tr style="height:26px"><td class="hh" style="height:26px">2</td><td>0~200</td><td>G2B12</td></tr>
        </table>
      </div>
      <svg width="232" height="345" viewBox="659 306 232 345" class="fn" font-family="'Noto Sans CJK SC',sans-serif">
        <rect x="659" y="306" width="232" height="345" fill="#000"/>
        <g fill="none" stroke="#fff">
          <path d="M689.500 376V398L698.500 405H681.500L689.500 413V432M825.500 376V398L834.500 405H817.500L825.500 413V432M689.500 381.500H825.500"/>
          <path d="M689.500 418.500H715.500V547.500H798.500V418.500H825.500"/>
          <path d="M673 460.500H757.500V445.500M676 491.500H785.500V478M728.500 491.500V479"/>
          <path d="M836.500 415V507M829 418.500H843M829 449.500H843M829 478.500H843M829 506.500H843"/>
          <path d="M856.500 415V548M848 418.500H863M848 528.500H863M848 547.500H863"/>
          <path d="M877.500 378V548M870 381.500H884M870 547.500H884"/>
          <path d="M715.500 565.500H798.500M715.500 558V573M798.500 558V573"/>
          <path d="M833 415l6 6M833 446l6 6M833 475l6 6M833 503l6 6M853 415l6 6M853 525l6 6M853 544l6 6M874 378l6 6M874 544l6 6M713 568l5-5M796 568l5-5"/>
        </g>
        <path d="M717 610.500H803" stroke="#fff" stroke-width="2"/>
        <g fill="#fff" font-size="12" font-family="'Liberation Serif',serif">
          <text x="840" y="438">a</text><text x="840" y="498">a</text><text x="858" y="481">hw</text><text x="862" y="543">s</text><text x="882" y="485">h</text><text x="750" y="580">b</text>
        </g>
        <g fill="#fff" font-size="12"><text x="680" y="456">拉筋</text><text x="665" y="486">侧面纵筋</text></g>
        <text x="757" y="605" fill="#fff" font-size="15" text-anchor="middle">梁截面示意图</text>
        <g fill="none" stroke="#f00" stroke-width="2">
          <rect x="723" y="388" width="66.700" height="151.300"/>
          <path d="M723 445.700H789.700M723 474.700H789.700M729 390 738.300 398.300M723.700 395 735 403.300M726 450 731.700 459M788.300 450 783.300 457M727.700 480 731 487.300M788.300 480 783.300 487.300"/>
        </g>
        <g>
          <use href="#g" x="723.500" y="389" width="5" height="5"/><use href="#g" x="753" y="389" width="5" height="5"/><use href="#g" x="783" y="389" width="5" height="5"/>
          <use href="#g" x="723.500" y="401" width="5" height="5"/><use href="#g" x="753" y="401" width="5" height="5"/><use href="#g" x="783" y="401" width="5" height="5"/>
          <use href="#g" x="723.500" y="447" width="5" height="5"/><use href="#g" x="783" y="447" width="5" height="5"/>
          <use href="#g" x="723.500" y="476" width="5" height="5"/><use href="#g" x="783" y="476" width="5" height="5"/>
          <use href="#g" x="723.500" y="502" width="5" height="5"/><use href="#g" x="783" y="502" width="5" height="5"/>
          <use href="#g" x="723.500" y="522" width="5" height="5"/><use href="#g" x="753" y="522" width="5" height="5"/><use href="#g" x="783" y="522" width="5" height="5"/>
          <use href="#g" x="723.500" y="533" width="5" height="5"/><use href="#g" x="739" y="533" width="5" height="5"/><use href="#g" x="753" y="533" width="5" height="5"/><use href="#g" x="768" y="533" width="5" height="5"/><use href="#g" x="783" y="533" width="5" height="5"/>
        </g>
      </svg>
    </div>
    <div class="d-flex" style="margin-top:6px;gap:6px">
      <button class="btn bd" type="button">查看说明</button>
      <button class="btn bd" style="margin-left:61px" type="button">导入</button>
      <button class="btn bd" type="button">导出</button>
      <button class="btn bd" type="button">添加行</button>
      <button class="btn bd" type="button">添加列</button>
      <button class="btn bd" type="button" disabled>删除行</button>
      <button class="btn bd" type="button" disabled>删除列</button>
    </div>
    <div class="d-flex align-items-center gap-1" style="margin-top:8px;height:14px"><span>生成方式</span><span class="hrln"></span></div>
    <div class="d-flex align-items-center" style="margin-top:9px;height:16px">
      <span class="fl" style="width:128px;margin-left:1px"><span class="rd on"></span>选择图元</span>
      <span class="fl"><span class="rd"></span>选择楼层</span>
    </div>
    <div class="fl" style="margin-top:7px;margin-left:1px;height:16px"><span class="cbx" style="width:14px;height:14px"></span>覆盖梁跨中手动编辑的侧面原位标注筋</div>
    <div class="hrln" style="margin-top:6px;height:0;flex:none"></div>
    <div class="d-flex justify-content-end" style="margin-top:6px;gap:6px">
      <button class="btn bd bp" type="button">确定</button>
      <button class="btn bd bw" type="button">取消</button>
    </div>
    <span class="grip"></span>
  </div>
</div>

<svg class="ovl" width="1318" height="844" viewBox="0 0 1318 844">
  <path d="M274 390 290 382 289 388 1183 510V513L288 395 290 401Z" fill="#ff2a1a"/>
  <path d="M1089 70 1094 88 1088 86 1025 260 1024 260 1082 84 1075 86Z" fill="#ff2a1a"/>
</svg>
</body>
</html>
